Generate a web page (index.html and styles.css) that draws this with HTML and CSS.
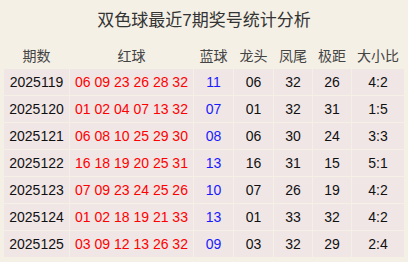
FILE: index.html
```html
<!DOCTYPE html>
<html lang="zh">
<head>
<meta charset="utf-8">
<title>双色球最近7期奖号统计分析</title>
<link rel="stylesheet" href="styles.css">
</head>
<body>
<div class="title">双色球最近7期奖号统计分析</div>
<table class="stats">
  <colgroup>
    <col class="c-period"><col class="c-red"><col class="c-blue"><col class="c-s"><col class="c-s2"><col class="c-s2"><col class="c-ratio">
  </colgroup>
  <thead>
    <tr><th>期数</th><th>红球</th><th>蓝球</th><th>龙头</th><th>凤尾</th><th>极距</th><th>大小比</th></tr>
  </thead>
  <tbody>
    <tr><td>2025119</td><td class="red">06 09 23 26 28 32</td><td class="blue">11</td><td>06</td><td>32</td><td>26</td><td>4:2</td></tr>
    <tr><td>2025120</td><td class="red">01 02 04 07 13 32</td><td class="blue">07</td><td>01</td><td>32</td><td>31</td><td>1:5</td></tr>
    <tr><td>2025121</td><td class="red">06 08 10 25 29 30</td><td class="blue">08</td><td>06</td><td>30</td><td>24</td><td>3:3</td></tr>
    <tr><td>2025122</td><td class="red">16 18 19 20 25 31</td><td class="blue">13</td><td>16</td><td>31</td><td>15</td><td>5:1</td></tr>
    <tr><td>2025123</td><td class="red">07 09 23 24 25 26</td><td class="blue">10</td><td>07</td><td>26</td><td>19</td><td>4:2</td></tr>
    <tr><td>2025124</td><td class="red">01 02 18 19 21 33</td><td class="blue">13</td><td>01</td><td>33</td><td>32</td><td>4:2</td></tr>
    <tr><td>2025125</td><td class="red">03 09 12 13 26 32</td><td class="blue">09</td><td>03</td><td>32</td><td>29</td><td>2:4</td></tr>
  </tbody>
</table>
</body>
</html>
```
FILE: styles.css
```css
html, body {
  margin: 0;
  padding: 0;
  background: #f4f0e6;
}
body {
  font-family: "Liberation Sans", "Noto Sans CJK SC", sans-serif;
  color: #111;
}
.title {
  height: 41px;
  line-height: 41px;
  text-align: center;
  font-size: 17px;
  color: #333;
}
.stats {
  table-layout: fixed;
  width: 402px;
  margin-left: 3px;
  border-collapse: separate;
  border-spacing: 1px;
  font-size: 14px;
}
.c-period { width: 65px; }
.c-red { width: 123px; }
.c-blue { width: 39px; }
.c-s { width: 39px; }
.c-s2 { width: 38px; }
.c-ratio { width: 52px; }
.stats th, .stats td {
  height: 26px;
  padding: 0;
  text-align: center;
  vertical-align: middle;
  white-space: nowrap;
}
.stats th {
  font-weight: normal;
  color: #444;
}
.stats td {
  background: #f0e6e6;
}
.stats td.red { color: #ff0000; }
.stats td.blue { color: #1a1aff; }
```
